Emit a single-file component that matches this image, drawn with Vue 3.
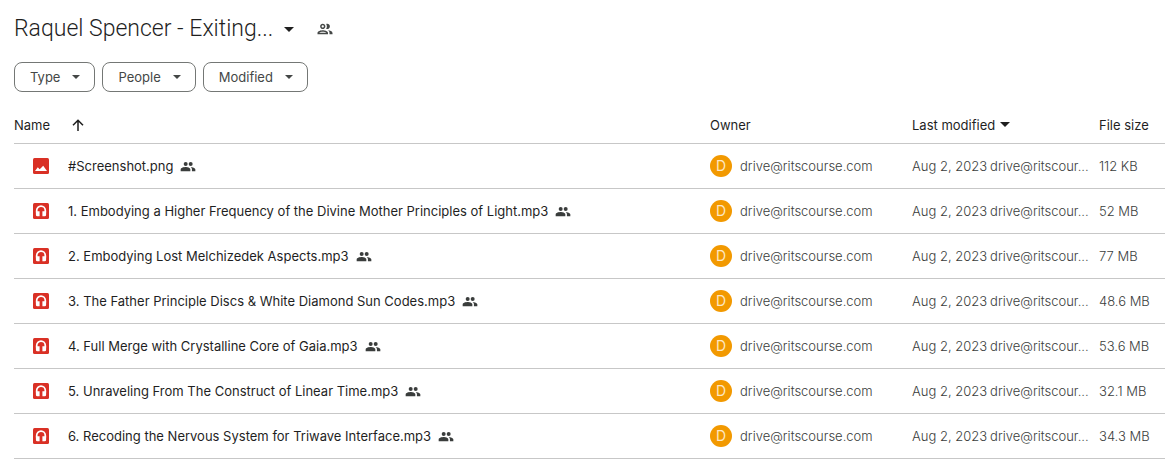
<script setup>
const filters = ['Type', 'People', 'Modified']
const owner = 'drive@ritscourse.com'
const files = [
  { name: '#Screenshot.png', kind: 'image', size: '112 KB' },
  { name: '1. Embodying a Higher Frequency of the Divine Mother Principles of Light.mp3', kind: 'audio', size: '52 MB' },
  { name: '2. Embodying Lost Melchizedek Aspects.mp3', kind: 'audio', size: '77 MB' },
  { name: '3. The Father Principle Discs & White Diamond Sun Codes.mp3', kind: 'audio', size: '48.6 MB' },
  { name: '4. Full Merge with Crystalline Core of Gaia.mp3', kind: 'audio', size: '53.6 MB' },
  { name: '5. Unraveling From The Construct of Linear Time.mp3', kind: 'audio', size: '32.1 MB' },
  { name: '6. Recoding the Nervous System for Triwave Interface.mp3', kind: 'audio', size: '34.3 MB' },
]
</script>

<template>
  <main class="drive">
    <header class="title-bar">
      <h1>
        <button type="button" class="title">
          <span>Raquel Spencer - Exiting...</span>
          <svg class="title-caret" viewBox="0 0 10 5" aria-hidden="true"><path d="M0 0h10L5 5z" /></svg>
        </button>
      </h1>
      <button type="button" class="share" aria-label="Manage access">
        <svg viewBox="0 0 24 24" aria-hidden="true">
          <path d="M9 13.75c-2.34 0-7 1.17-7 3.5V19h14v-1.75c0-2.33-4.66-3.5-7-3.5zM4.34 17c.84-.58 2.87-1.25 4.66-1.25s3.82.67 4.66 1.25H4.34zM9 12c1.93 0 3.5-1.57 3.5-3.5S10.93 5 9 5 5.5 6.57 5.5 8.5 7.07 12 9 12zm0-5c.83 0 1.5.67 1.5 1.5S9.83 10 9 10s-1.5-.67-1.5-1.5S8.17 7 9 7zm7.04 6.81c1.16.84 1.96 1.96 1.96 3.44V19h4v-1.75c0-2.02-3.5-3.17-5.96-3.44zM15 12c1.93 0 3.5-1.57 3.5-3.5S16.93 5 15 5c-.54 0-1.04.13-1.5.35.63.89 1 1.98 1 3.15s-.37 2.26-1 3.15c.46.22.96.35 1.5.35z" />
        </svg>
      </button>
    </header>

    <div class="filters">
      <button v-for="f in filters" :key="f" type="button" class="chip">
        <span>{{ f }}</span>
        <svg viewBox="0 0 8 4" aria-hidden="true"><path d="M0 0h8L4 4z" /></svg>
      </button>
    </div>

    <table>
      <colgroup>
        <col />
        <col class="col-owner" />
        <col class="col-modified" />
        <col class="col-size" />
      </colgroup>
      <thead>
        <tr>
          <th scope="col">
            <button type="button" class="sort sort-name">
              <span>Name</span>
              <svg viewBox="0 0 12 12" aria-hidden="true"><path d="M6 12V1.5M1 6.2L6 1.2l5 5" fill="none" stroke="currentColor" stroke-width="1.5" /></svg>
            </button>
          </th>
          <th scope="col">Owner</th>
          <th scope="col">
            <button type="button" class="sort sort-date">
              <span>Last modified</span>
              <svg viewBox="0 0 10 5" aria-hidden="true"><path d="M0 0h10L5 5z" /></svg>
            </button>
          </th>
          <th scope="col">File size</th>
        </tr>
      </thead>
      <tbody>
        <tr v-for="f in files" :key="f.name">
          <td>
            <div class="file">
              <svg class="kind" viewBox="0 0 16 16" aria-hidden="true">
                <rect width="16" height="16" rx="1.5" fill="#d93025" />
                <path v-if="f.kind === 'image'" d="M2 13l2.8-3.8 1.8 2L8 10l2.2-2.2L14 13z" fill="#fff" />
                <g v-else>
                  <path d="M3.7 9.5v-2a4.3 4.3 0 0 1 8.6 0v2" fill="none" stroke="#fff" stroke-width="1.7" />
                  <path d="M2.9 8.3h3.7v5H4.4a1.5 1.5 0 0 1-1.5-1.5zM9.4 8.3h3.7v3.5a1.5 1.5 0 0 1-1.5 1.5H9.4z" fill="#fff" />
                </g>
              </svg>
              <span class="file-name">{{ f.name }}</span>
              <svg class="shared" viewBox="0 0 24 24" role="img" aria-label="Shared">
                <circle cx="8.5" cy="9" r="3" />
                <circle cx="16" cy="9" r="3" />
                <path d="M8.5 13.5C6 13.5 1 14.7 1 17v3h14.5v-3c0-2.300-4.500-3.500-7-3.500zM16 13.500c1.200.9 1.900 2 1.900 3.500v3H23v-3c0-2.100-4.300-3.200-7-3.500z" />
              </svg>
            </div>
          </td>
          <td>
            <div class="owner">
              <span class="avatar" aria-hidden="true">D</span>
              <span>{{ owner }}</span>
            </div>
          </td>
          <td>
            <div class="modified">
              <span>Aug 2, 2023</span>
              <span>drive@ritscour...</span>
            </div>
          </td>
          <td>{{ f.size }}</td>
        </tr>
      </tbody>
    </table>
  </main>
</template>

<style>
body {
  background: #fff;
}
</style>

<style scoped>
.drive {
  padding: 13px 0 0 14px;
  font-family: Inter, "Liberation Sans", sans-serif;
  font-size: 13px;
  line-height: 20px;
  color: #1f1f1f;
}
button {
  display: flex;
  align-items: center;
  margin: 0;
  padding: 0;
  border: 0;
  background: none;
  color: inherit;
  font: inherit;
  cursor: pointer;
}
svg {
  display: block;
  flex: none;
  fill: currentColor;
}
.title-bar {
  display: flex;
  align-items: center;
  gap: 22px;
}
h1 {
  margin: 0;
  font-family: Roboto, "Liberation Sans", sans-serif;
  font-size: 23px;
  line-height: 32px;
  font-weight: 300;
}
.title {
  gap: 11px;
}
.title-caret {
  width: 10px;
  height: 5px;
}
.share {
  color: #444746;
}
.share svg {
  width: 18px;
  height: 18px;
}
.filters {
  display: flex;
  gap: 7px;
  margin-top: 17px;
}
.chip {
  box-sizing: border-box;
  gap: 12px;
  height: 30px;
  padding: 0 14px 0 15px;
  border: 1px solid #747775;
  border-radius: 8px;
  color: #444746;
}
.chip svg {
  width: 8px;
  height: 4px;
}
table {
  width: 100%;
  margin-top: 14px;
  border-collapse: collapse;
  table-layout: fixed;
}
.col-owner {
  width: 202px;
}
.col-modified {
  width: 187px;
}
.col-size {
  width: 66px;
}
th,
td {
  height: 44px;
  padding: 0;
  border-bottom: 1px solid #c7c7c7;
  text-align: left;
  font-weight: 400;
  white-space: nowrap;
}
th {
  height: 37px;
}
td {
  color: #3a3d3c;
  font-weight: 300;
}
.sort-name {
  gap: 22px;
}
.sort-name svg {
  width: 12px;
  height: 12px;
}
.sort-date {
  gap: 5px;
}
.sort-date svg {
  width: 10px;
  height: 5px;
}
.file {
  display: flex;
  align-items: center;
  padding-left: 19px;
}
.kind {
  width: 16px;
  height: 16px;
}
.file-name {
  margin: 0 7px 0 19px;
  overflow: hidden;
  text-overflow: ellipsis;
  color: #1f1f1f;
  font-weight: 400;
}
.shared {
  width: 16px;
  height: 16px;
}
.owner {
  display: flex;
  align-items: center;
  gap: 8px;
}
.avatar {
  width: 22px;
  height: 22px;
  border-radius: 50%;
  background: #f29900;
  color: #fde8c4;
  font-size: 14px;
  font-weight: 400;
  line-height: 22px;
  text-align: center;
}
.modified {
  display: flex;
  gap: 3px;
}
</style>
